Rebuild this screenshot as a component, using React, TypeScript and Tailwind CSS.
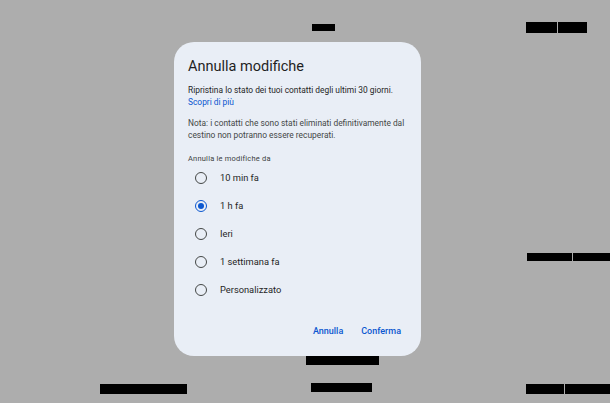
import React, { useState } from 'react';

const options = ['10 min fa', '1 h fa', 'Ieri', '1 settimana fa', 'Personalizzato'];

// redaction bars scattered on the dimmed page behind the dialog
const bars = [
  { cls: 'left-[312px] top-[24px] w-[23px] h-[7px]' },
  { cls: 'left-[526px] top-[22px] w-[31px] h-[11px]' },
  { cls: 'left-[558px] top-[22px] w-[29px] h-[11px]' },
  { cls: 'left-[527px] top-[253px] w-[45px] h-[8px]' },
  { cls: 'left-[573px] top-[253px] w-[37px] h-[8px]' },
  { cls: 'left-[306px] top-[356px] w-[73px] h-[9px]' },
  { cls: 'left-[100px] top-[384px] w-[87px] h-[10px]' },
  { cls: 'left-[311px] top-[383px] w-[61px] h-[9px]' },
  { cls: 'left-[526px] top-[384px] w-[38px] h-[10px]' },
  { cls: 'left-[565px] top-[384px] w-[45px] h-[10px]' },
];

const Radio = ({ checked }: { checked: boolean }) => (
  <span
    className={`flex items-center justify-center w-[12px] h-[12px] rounded-full border-[1.5px] ${
      checked ? 'border-[#0b57d0]' : 'border-[#444746]'
    }`}
  >
    {checked && <span className="w-[6px] h-[6px] rounded-full bg-[#0b57d0]" />}
  </span>
);

const App: React.FC = () => {
  const [selected, setSelected] = useState(1);

  return (
    <div className="relative w-[610px] h-[403px] bg-[#adadad] overflow-hidden font-['Roboto','Liberation_Sans',sans-serif]">
      {bars.map((b, i) => (
        <div key={i} className={`absolute bg-black ${b.cls}`} />
      ))}

      <div className="absolute left-[174px] top-[42px] w-[247px] h-[314px] rounded-[20px] bg-[#e9eef6] pt-[15px] pl-[14px] pr-[13px] flex flex-col">
        <h1 className="text-[14.5px] leading-[20px] text-[#1f1f1f]">Annulla modifiche</h1>

        <p className="mt-[7px] text-[8.4px] leading-[12px] text-[#1f1f1f]">
          Ripristina lo stato dei tuoi contatti degli ultimi 30 giorni.
          <br />
          <span className="text-[#0b57d0]">Scopri di più</span>
        </p>

        <p className="mt-[9px] text-[8.4px] leading-[12px] text-[#444746]">
          Nota: i contatti che sono stati eliminati definitivamente dal cestino non potranno essere recuperati.
        </p>

        <p className="mt-[13px] text-[7.5px] leading-[10px] tracking-[0.2px] text-[#3c3f3e]">Annulla le modifiche da</p>

        <div className="flex flex-col">
          {options.map((o, i) => (
            <button
              key={o}
              onClick={() => setSelected(i)}
              className="h-[28px] flex items-center pl-[7px] text-left"
            >
              <Radio checked={selected === i} />
              <span className="ml-[13px] text-[9.3px] text-[#1f1f1f]">{o}</span>
            </button>
          ))}
        </div>

        <div className="mt-[18px] h-[20px] flex items-center justify-end gap-[18px] pr-[7px] text-[9px] font-medium text-[#0b57d0]">
          <button>Annulla</button>
          <button>Conferma</button>
        </div>
      </div>
    </div>
  );
};

export default App;
